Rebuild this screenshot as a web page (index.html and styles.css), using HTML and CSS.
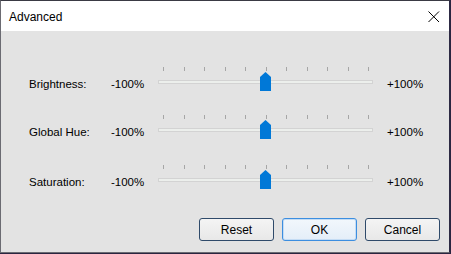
FILE: index.html
```html
<!DOCTYPE html>
<html lang="en">
<head>
    <meta charset="UTF-8">
    <title>Advanced</title>
    <link rel="stylesheet" href="styles.css">
</head>
<body>
    <div class="window">
        <div class="titlebar">
            <span class="title">Advanced</span>
            <svg class="close" width="12" height="12" viewBox="0 0 12 12">
                <path d="M0.5 0.5 L11 11 M11 0.5 L0.5 11" stroke="#000" stroke-width="1" fill="none"/>
            </svg>
        </div>
        <div class="content">
            <div class="rows">
                <div class="row row-1">
                    <span class="label">Brightness:</span>
                    <span class="min">-100%</span>
                    <div class="slider">
                        <div class="ticks">
                            <i></i><i></i><i></i><i></i><i></i><i></i><i></i><i></i><i></i><i></i><i></i>
                        </div>
                        <div class="track"></div>
                        <div class="thumb"></div>
                    </div>
                    <span class="max">+100%</span>
                </div>
                <div class="row row-2">
                    <span class="label">Global Hue:</span>
                    <span class="min">-100%</span>
                    <div class="slider">
                        <div class="ticks">
                            <i></i><i></i><i></i><i></i><i></i><i></i><i></i><i></i><i></i><i></i><i></i>
                        </div>
                        <div class="track"></div>
                        <div class="thumb"></div>
                    </div>
                    <span class="max">+100%</span>
                </div>
                <div class="row row-3">
                    <span class="label">Saturation:</span>
                    <span class="min">-100%</span>
                    <div class="slider">
                        <div class="ticks">
                            <i></i><i></i><i></i><i></i><i></i><i></i><i></i><i></i><i></i><i></i><i></i>
                        </div>
                        <div class="track"></div>
                        <div class="thumb"></div>
                    </div>
                    <span class="max">+100%</span>
                </div>
            </div>
            <div class="buttons">
                <button>Reset</button>
                <button class="default">OK</button>
                <button>Cancel</button>
            </div>
        </div>
    </div>
</body>
</html>
```

FILE: styles.css
```css
body {
    margin: 0;
    background: #2a2540;
    font-family: "Liberation Sans", Arial, sans-serif;
    color: #000;
}
.window {
    width: 448px;
    height: 251px;
    border: 1px solid #6b6b72;
    border-right-color: #2d2a44;
    border-top-color: #3a3a44;
    display: flex;
    flex-direction: column;
    background: #e3e3e3;
}
.titlebar {
    height: 30px;
    background: #fff;
    display: flex;
    align-items: center;
    justify-content: space-between;
    padding: 0 9px 0 8px;
}
.title {
    font-size: 12px;
    margin-top: 1px;
}
.close {
    margin-top: 1px;
}
.content {
    flex: 1;
    display: flex;
    flex-direction: column;
    padding: 36px 9px 11px 28px;
}
.rows {
    display: flex;
    flex-direction: column;
}
.row {
    display: flex;
    align-items: flex-start;
    height: 24px;
    font-size: 11.5px;
}
.row-2 {
    margin-top: 24px;
}
.row-3 {
    margin-top: 26px;
}
.label,
.min,
.max {
    line-height: 14px;
    margin-top: 10px;
}
.label {
    width: 82px;
}
.min {
    width: 47px;
}
.max {
    margin-left: 14px;
}
.slider {
    position: relative;
    width: 215px;
    height: 24px;
}
.ticks {
    display: flex;
    justify-content: space-between;
    padding: 0 4px 0 5px;
    height: 4px;
}
.ticks i {
    width: 1px;
    height: 4px;
    background: #a6a6a6;
}
.track {
    margin-top: 9px;
    height: 2px;
    border: 1px solid #d3d3d3;
    background: #ecefec;
}
.thumb {
    position: absolute;
    left: 102px;
    top: 5px;
    width: 11px;
    height: 19px;
    background: #0078d7;
    clip-path: polygon(0 5px, 5.5px 0, 11px 5px, 11px 100%, 0 100%);
}
.buttons {
    margin-top: auto;
    display: flex;
    justify-content: flex-end;
    gap: 8px;
}
button {
    width: 75px;
    height: 23px;
    font-family: "Liberation Sans", Arial, sans-serif;
    font-size: 12px;
    color: #000;
    background: linear-gradient(#f4f4f4, #e8e8e8);
    border: 1px solid #2f4a6a;
    border-radius: 3px;
    padding: 0;
}
button.default {
    border-color: #3c8ee0;
    background: linear-gradient(#f2f7fc, #e4eef8);
    box-shadow: inset 0 0 0 1px #c4dcf4;
}
```
